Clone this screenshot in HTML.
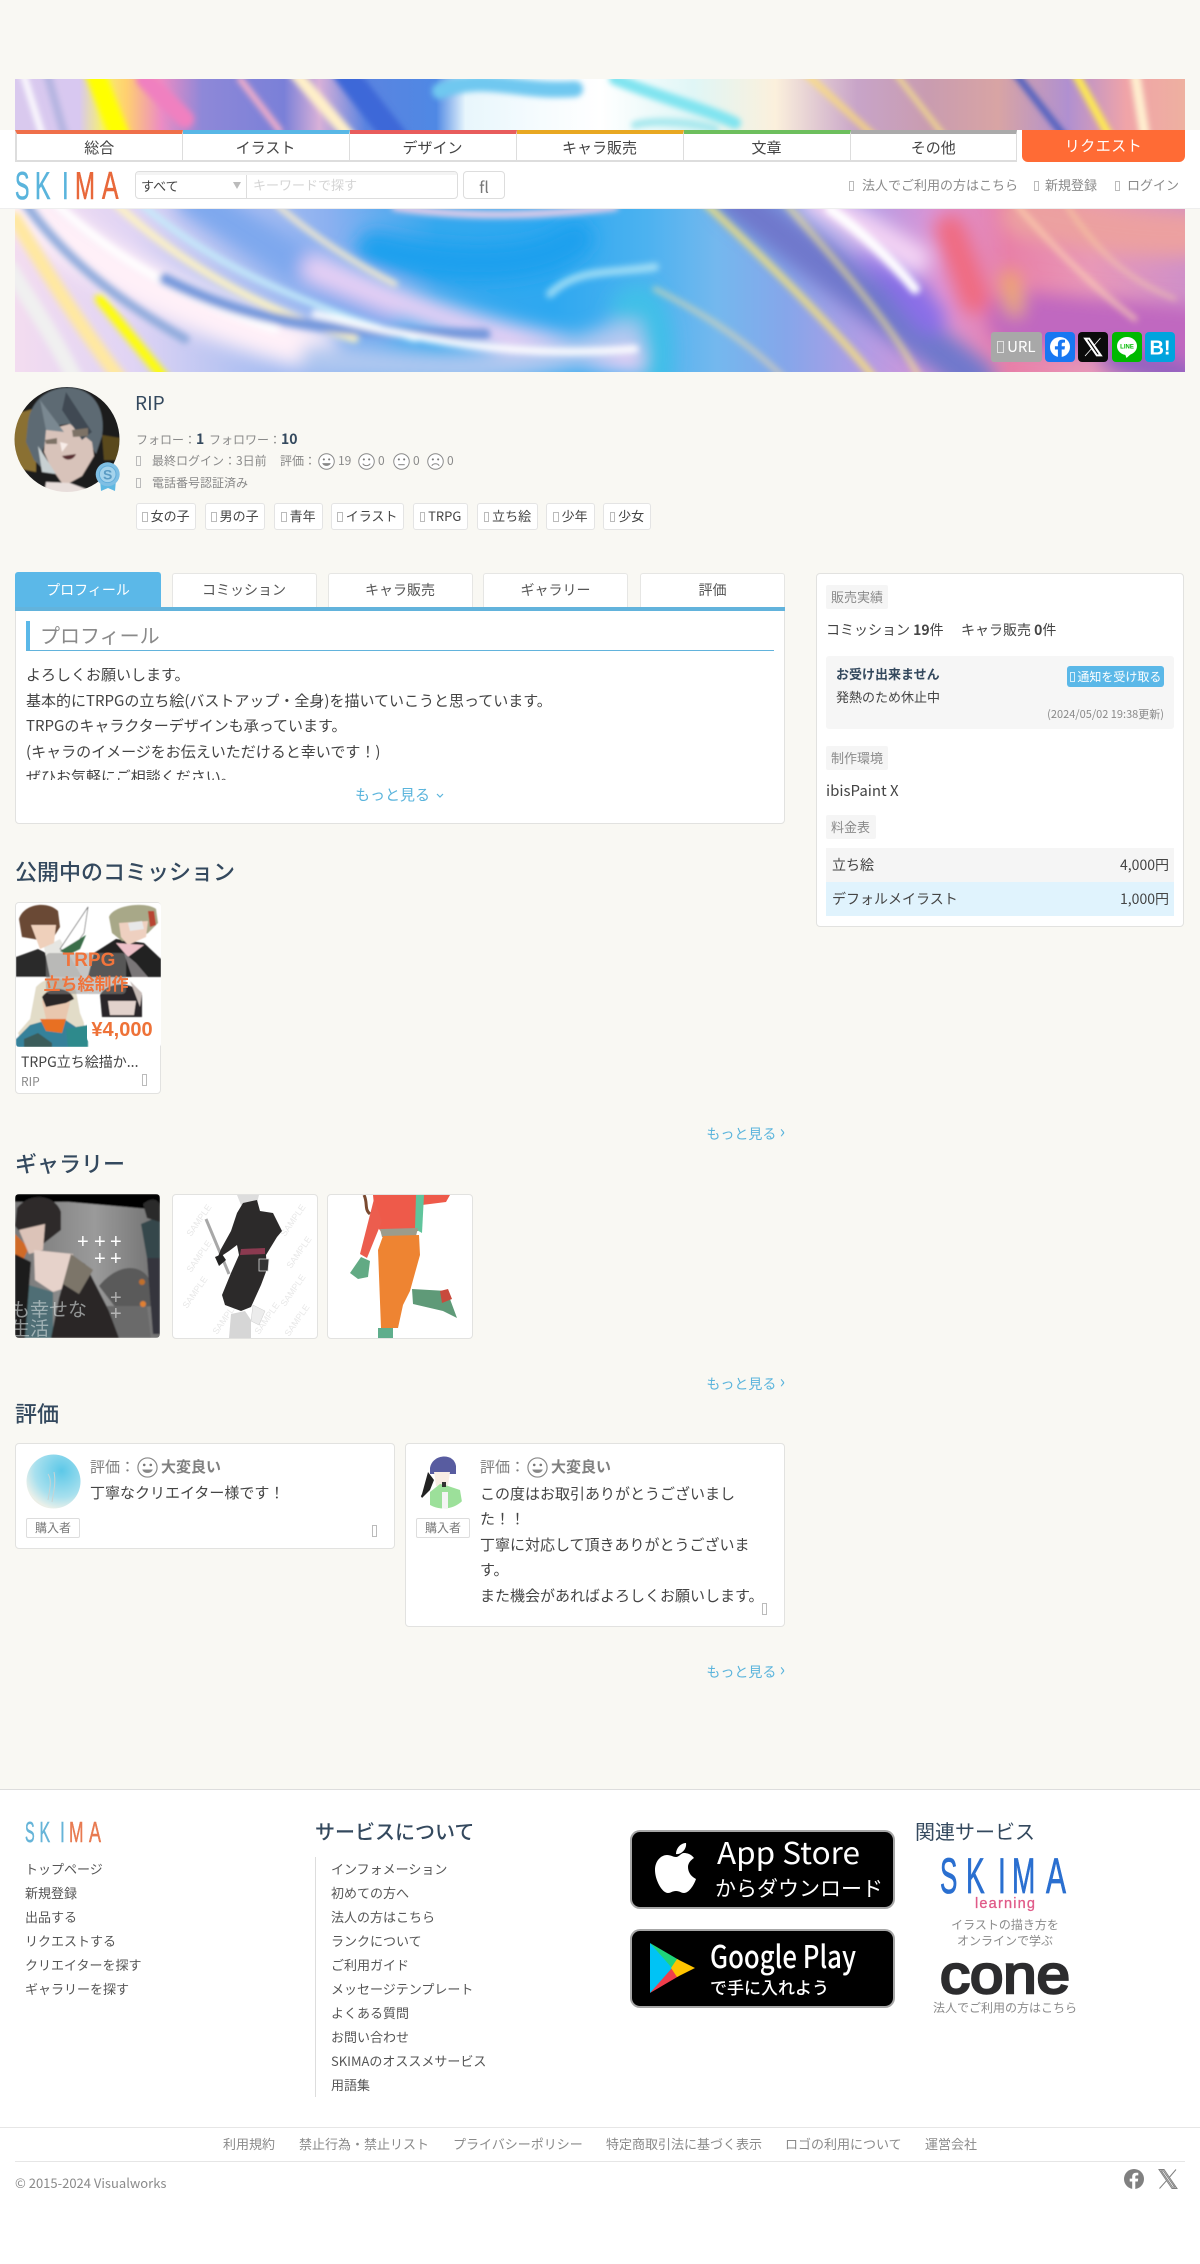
<!DOCTYPE html>
<html lang="ja">
<head>
<meta charset="utf-8">
<title>RIP - SKIMA</title>
<style>
html,body{margin:0;padding:0}
body{width:1200px;height:2264px;position:relative;overflow:hidden;background:#f9f8f3;font-family:"Noto Sans CJK JP","Liberation Sans",sans-serif;color:#333;font-size:14px}
.a{position:absolute;display:block;box-sizing:border-box}
.t{position:absolute;white-space:nowrap;line-height:20px;height:20px}
.c{text-align:center}
.g{color:#8a8a8a}
.b{color:#5ab4dc}
.h{color:#34495e;font-size:22px;font-weight:500;line-height:30px;height:30px}
.w{background:#fff;border:1px solid #e2e2e0;border-radius:4px}
.q{display:inline-block;box-sizing:border-box;width:.42em;height:.8em;border:1px solid #bbb;vertical-align:-1px}
.nav{position:absolute;top:130px;height:32px;box-sizing:border-box;background:#fff;border-top:4px solid;border-bottom:2px solid #ddd;border-right:1px solid #ddd;text-align:center;line-height:27px;font-size:15px;color:#444}
.tab{position:absolute;top:573px;height:35px;box-sizing:border-box;background:#fff;border:1px solid #e6e6e4;border-bottom:0;border-radius:3px 3px 0 0;text-align:center;line-height:33px;font-size:14px;color:#555;width:145px}
.tag{position:absolute;top:503px;height:27px;box-sizing:border-box;background:#fff;border:1px solid #e4e4e4;border-radius:3px;text-align:center;line-height:24px;font-size:13px;color:#444}
.lab{position:absolute;height:24px;background:#f5f5f5;border-radius:2px;color:#8a8a8a;font-size:13px;line-height:23px;padding:0 5px;box-sizing:border-box;white-space:nowrap}
.f{position:absolute;white-space:nowrap;font-size:13px;line-height:20px;height:20px;color:#555}
.fb{position:absolute;white-space:nowrap;font-size:13px;line-height:20px;height:20px;color:#8a8a8a}
.m{font-size:18px;line-height:14px;vertical-align:1px}
svg{display:block}
</style>
</head>
<body>

<!-- top banner -->
<svg class="a" style="left:15px;top:79px" width="1170" height="52" viewBox="0 0 1170 52">
<defs>
<linearGradient id="tb" x1="0" x2="1" y1="0" y2="0">
<stop offset="0" stop-color="#d9c9ee"/><stop offset=".055" stop-color="#d8c8f0"/><stop offset=".075" stop-color="#f6f070"/><stop offset=".095" stop-color="#ffd070"/><stop offset=".125" stop-color="#ec8cc4"/><stop offset=".16" stop-color="#8e88d8"/><stop offset=".23" stop-color="#7a80d8"/><stop offset=".26" stop-color="#d8b0d8"/><stop offset=".3" stop-color="#5a84e0"/><stop offset=".36" stop-color="#4f88e4"/><stop offset=".385" stop-color="#e8f6fc"/><stop offset=".44" stop-color="#f4fbfe"/><stop offset=".5" stop-color="#fff"/><stop offset=".58" stop-color="#e0f6f6"/><stop offset=".65" stop-color="#fbf0dc"/><stop offset=".72" stop-color="#c8a4c8"/><stop offset=".78" stop-color="#c99cb0"/><stop offset=".84" stop-color="#d8a4a4"/><stop offset=".9" stop-color="#b090d0"/><stop offset=".95" stop-color="#f0a4a8"/><stop offset="1" stop-color="#eeb0a0"/>
</linearGradient>
<filter id="b1" x="-20%" y="-50%" width="140%" height="200%"><feGaussianBlur stdDeviation="3"/></filter>
<clipPath id="tbc"><rect width="1170" height="52"/></clipPath>
</defs>
<g clip-path="url(#tbc)">
<rect width="1170" height="52" fill="url(#tb)"/>
<g filter="url(#b1)" fill="none" stroke-linecap="round">
<path d="M80 -6L105 58" stroke="#ffff00" stroke-width="20"/>
<path d="M8 -6L28 58" stroke="#fff" stroke-width="6"/>
<path d="M32 -6L50 58" stroke="#b4b4e0" stroke-width="8"/>
<path d="M130 0L170 40" stroke="#f080c0" stroke-width="18"/>
<path d="M225 0L265 52" stroke="#f8b0c8" stroke-width="6"/>
<path d="M280 -6L335 58" stroke="#fff0c8" stroke-width="12"/>
<path d="M330 -6L380 58" stroke="#3c68d8" stroke-width="24"/>
<path d="M425 12C470 -6 500 14 560 10" stroke="#70c8f0" stroke-width="16"/>
<path d="M600 0C650 20 690 30 720 44" stroke="#80e4f0" stroke-width="12"/>
<path d="M620 46C640 40 680 44 700 50" stroke="#a8e8ee" stroke-width="8"/>
<path d="M790 -6L860 58" stroke="#ffe070" stroke-width="7" opacity=".7"/>
<path d="M880 -6L930 58" stroke="#fff080" stroke-width="5" opacity=".7"/>
<path d="M1000 -6L1050 58" stroke="#5060c0" stroke-width="7"/>
<path d="M1060 -6L1095 58" stroke="#ffec50" stroke-width="8"/>
<path d="M1120 -6L1130 58" stroke="#fff0d0" stroke-width="10"/>
</g>
</g>
</svg>

<!-- header band -->
<div class="a" style="left:0;top:130px;width:1200px;height:79px;background:#fff;border-bottom:1px solid #eee"></div>
<div class="nav" style="left:15px;width:167.5px;border-top-color:#ef6f4a;border-left:2px solid #ddd">総合</div>
<div class="nav" style="left:182.5px;width:167px;border-top-color:#58b7e6">イラスト</div>
<div class="nav" style="left:349.5px;width:167px;border-top-color:#e85c5c">デザイン</div>
<div class="nav" style="left:516.5px;width:167px;border-top-color:#e8a822">キャラ販売</div>
<div class="nav" style="left:683.5px;width:167px;border-top-color:#6dbf5d">文章</div>
<div class="nav" style="left:850.5px;width:166.5px;border-top-color:#aaa">その他</div>
<div class="a c" style="left:1022px;top:130px;width:163px;height:32px;background:#ff6b35;border-radius:0 0 6px 6px;color:#fff;font-size:15px;line-height:31px;letter-spacing:.5px">リクエスト</div>

<!-- logo -->
<svg class="a" style="left:15px;top:168px" width="106" height="34" viewBox="0 0 106 34" font-family="Liberation Sans,sans-serif" font-size="40" stroke-width=".6">
<text transform="translate(0,31) scale(.54,.98)" fill="#5ab4dc" stroke="#5ab4dc">S</text>
<text transform="translate(20,31) scale(.58,.98)" fill="#5ab4dc" stroke="#5ab4dc">K</text>
<text transform="translate(47,31) scale(.6,.98)" fill="#5ab4dc" stroke="#5ab4dc">I</text>
<text transform="translate(60,31) scale(.6,.98)" fill="#e8683a" stroke="#e8683a">M</text>
<text transform="translate(87,31) scale(.62,.98)" fill="#e8683a" stroke="#e8683a">A</text>
</svg>

<!-- search -->
<div class="a" style="left:135px;top:171px;width:323px;height:28px;background:#fff;border:1px solid #ddd;border-radius:4px"></div>
<div class="a" style="left:246px;top:171px;width:1px;height:28px;background:#ddd"></div>
<div class="a" style="left:136px;top:172px;width:321px;height:3px;background:#f4f4f4;border-radius:3px 3px 0 0"></div>
<div class="t" style="left:141px;top:176px;font-size:13px;color:#444">すべて</div>
<div class="a" style="left:233px;top:182px;width:0;height:0;border-left:4px solid transparent;border-right:4px solid transparent;border-top:7px solid #bbb"></div>
<div class="t" style="left:253px;top:175px;font-size:13px;color:#d4d4d4">キーワードで探す</div>
<div class="a" style="left:463px;top:171px;width:42px;height:28px;background:#fff;border:1px solid #ddd;border-radius:4px"></div>
<div class="t c" style="left:463px;top:176px;width:42px;font-size:16px;color:#777">fl</div>
<div class="t g" style="left:849px;top:175px;font-size:13px"><span class="q"></span></div>
<div class="t g" style="left:862px;top:175px;font-size:13px">法人でご利用の方はこちら</div>
<div class="t g" style="left:1034px;top:175px;font-size:13px"><span class="q"></span></div>
<div class="t g" style="left:1045px;top:175px;font-size:13px">新規登録</div>
<div class="t g" style="left:1115px;top:175px;font-size:13px"><span class="q"></span></div>
<div class="t g" style="left:1127px;top:175px;font-size:13px">ログイン</div>

<!-- main banner -->
<svg class="a" style="left:15px;top:209px" width="1170" height="163" viewBox="0 0 1170 163">
<defs>
<linearGradient id="mb" x1="0" x2="1" y1="0" y2="0">
<stop offset="0" stop-color="#f3dcf0"/><stop offset=".1" stop-color="#e0d4f4"/><stop offset=".18" stop-color="#b8c4f2"/><stop offset=".27" stop-color="#8ab0f0"/><stop offset=".36" stop-color="#35a8ee"/><stop offset=".46" stop-color="#2ea8f0"/><stop offset=".54" stop-color="#4cb2f0"/><stop offset=".6" stop-color="#74b8ee"/><stop offset=".66" stop-color="#86a6ea"/><stop offset=".73" stop-color="#b49ce4"/><stop offset=".79" stop-color="#dc94d4"/><stop offset=".85" stop-color="#e880a8"/><stop offset=".92" stop-color="#e898b8"/><stop offset="1" stop-color="#d090c8"/>
</linearGradient>
<filter id="m1" x="-20%" y="-50%" width="140%" height="200%"><feGaussianBlur stdDeviation="3.2"/></filter>
<filter id="m2" x="-20%" y="-50%" width="140%" height="200%"><feGaussianBlur stdDeviation="9"/></filter>
<clipPath id="mbc"><rect width="1170" height="163"/></clipPath>
</defs>
<g clip-path="url(#mbc)">
<rect width="1170" height="163" fill="url(#mb)"/>
<g filter="url(#m2)" fill="none" stroke-linecap="round">
<path d="M0 -10C60 40 150 100 300 140" stroke="#fff0f8" stroke-width="45"/>
<path d="M180 -10C240 30 310 70 360 110" stroke="#7ea8ee" stroke-width="40"/>
<path d="M300 60C400 100 500 140 620 150" stroke="#e8d0f4" stroke-width="28"/>
<path d="M300 150C420 160 520 170 620 120" stroke="#b0c8f0" stroke-width="30"/>
<path d="M360 40C440 60 520 60 560 30" stroke="#1ea0ee" stroke-width="36"/>
<path d="M720 -10L960 170" stroke="#6f78cc" stroke-width="40"/>
<path d="M860 40L915 110" stroke="#8a6ee8" stroke-width="32"/>
<path d="M800 -10L900 50" stroke="#f4d4f4" stroke-width="30"/>
<path d="M935 20L960 90" stroke="#f06a80" stroke-width="30"/>
<path d="M1000 110L1170 125" stroke="#c068c0" stroke-width="56"/>
<path d="M1100 150L1180 170" stroke="#9060c0" stroke-width="26"/>
<path d="M1010 5C1080 20 1120 25 1170 25" stroke="#eca0a0" stroke-width="46"/>
<path d="M610 100C630 70 650 120 640 170" stroke="#40c0e8" stroke-width="30"/>
<path d="M995 70L1000 100" stroke="#f0b060" stroke-width="16"/>
</g>
<g filter="url(#m1)" fill="none" stroke-linecap="round">
<path d="M0 10C30 60 60 110 105 170" stroke="#ffe8a0" stroke-width="14"/>
<path d="M10 -6C50 50 100 90 170 130" stroke="#8eaadc" stroke-width="9"/>
<path d="M-5 60C20 100 40 130 60 170" stroke="#f0f0f0" stroke-width="16"/>
<path d="M85 90L150 170" stroke="#ffff00" stroke-width="10"/>
<path d="M40 -6C100 50 170 90 260 120" stroke="#fff" stroke-width="8"/>
<path d="M100 -6C160 50 240 100 340 130" stroke="#fff4c0" stroke-width="7"/>
<path d="M125 -6C190 50 270 90 400 130" stroke="#c4ecfa" stroke-width="6"/>
<path d="M150 70C230 110 300 125 470 125" stroke="#7498dc" stroke-width="11"/>
<path d="M260 -6C300 30 350 60 380 75" stroke="#fff0c8" stroke-width="5"/>
<path d="M380 -2C430 6 500 10 600 -2" stroke="#f8d0e8" stroke-width="7"/>
<path d="M300 105C400 130 500 150 620 140" stroke="#fff" stroke-width="7"/>
<path d="M535 85C560 60 590 65 640 58" stroke="#c4f0f8" stroke-width="8" opacity=".7"/>
<path d="M690 -6C750 50 820 120 860 170" stroke="#ffe870" stroke-width="7" opacity=".8"/>
<path d="M770 -6C820 50 880 120 905 170" stroke="#fff080" stroke-width="6" opacity=".6"/>
<path d="M815 0C850 25 880 55 900 80" stroke="#ffffff" stroke-width="10"/>
<path d="M640 80C700 110 740 140 770 170" stroke="#f8e0a0" stroke-width="5" opacity=".6"/>
<path d="M1000 -6C1040 40 1080 80 1120 110" stroke="#ffd8b0" stroke-width="5" opacity=".7"/>
<path d="M1050 -6C1080 40 1110 70 1160 90" stroke="#ffe8a0" stroke-width="3" opacity=".6"/>
</g>
</g>
</svg>

<!-- share buttons -->
<div class="a c" style="left:991px;top:332px;width:51px;height:30px;background:#a8a8a8;border-radius:3px;color:#fff;font-size:15px;line-height:30px;white-space:nowrap"><span class="q" style="border-color:#e0e0e0"></span> URL</div>
<svg class="a" style="left:1045px;top:332px" width="30" height="30" viewBox="0 0 30 30"><rect width="30" height="30" rx="4" fill="#1877f2"/><circle cx="15" cy="15" r="10" fill="#fff"/><path d="M16.7 25.5v-8h2.8l.5-3.2h-3.3v-2c0-.9.4-1.7 1.8-1.7h1.5V7.8s-1.4-.2-2.7-.2c-2.7 0-4.4 1.6-4.4 4.5v2.2h-3v3.2h3v8z" fill="#1877f2"/></svg>
<svg class="a" style="left:1078px;top:332px" width="30" height="30" viewBox="0 0 30 30"><rect width="30" height="30" rx="4" fill="#0b0b0b"/><path d="M6 6h5.500L24 24h-5.500zM8.500 7.200L19.200 22.800h2.300L10.800 7.200zM22.500 6L16 13.500M13.600 16.600L7 24" fill="#fff" stroke="#fff" stroke-width=".8"/></svg>
<svg class="a" style="left:1112px;top:332px" width="30" height="30" viewBox="0 0 30 30"><rect width="30" height="30" rx="4" fill="#00b900"/><ellipse cx="15" cy="14" rx="10" ry="9" fill="#fff"/><path d="M13 22l1.500 4 5-4.500z" fill="#fff"/><text x="15" y="16.500" text-anchor="middle" font-size="6" font-weight="700" fill="#00b900" font-family="Liberation Sans,sans-serif">LINE</text></svg>
<svg class="a" style="left:1145px;top:332px" width="30" height="30" viewBox="0 0 30 30"><rect width="30" height="30" rx="4" fill="#00a4de"/><text x="15" y="22.500" text-anchor="middle" font-size="20" font-weight="700" fill="#fff" font-family="Liberation Sans,sans-serif">B!</text></svg>

<!-- profile -->
<svg class="a" style="left:10px;top:380px" width="120" height="115" viewBox="0 0 120 115">
<defs><clipPath id="av"><circle cx="57" cy="59.500" r="52.500"/></clipPath><filter id="avb"><feGaussianBlur stdDeviation=".7"/></filter></defs>
<g clip-path="url(#av)">
<g filter="url(#avb)">
<rect width="120" height="115" fill="#1c1b1b"/>
<path d="M2 35L26 28L26 92L6 88z" fill="#8a7030"/>
<path d="M92 55L110 58L108 80L94 80z" fill="#5a4a1e"/>
<path d="M18 42C22 16 44 6 62 8C84 10 96 30 92 56L86 74L76 58L58 44L42 46L32 72L36 92L24 80L16 62z" fill="#5d6a73"/>
<path d="M36 50L60 44L82 62L84 76L72 96L54 106L40 86L34 72z" fill="#d8c3ba"/>
<path d="M30 20L54 52L36 50z" fill="#7a8891"/>
<path d="M56 12L82 52L72 60L52 30z" fill="#3f4a53"/>
<path d="M35 60L47 58L47 64L36 64zM62 50L78 48L78 56L63 57z" fill="#7d7266"/>
<path d="M50 62L58 64L52 72z" fill="#f8ece8"/>
<path d="M52 76L66 74C64 80 56 82 52 76z" fill="#5a2f30"/>
<path d="M28 66L46 94L32 92z" fill="#c8d0d2"/>
<path d="M36 102L60 103L84 112V118H34z" fill="#e8dedb"/>
</g>
</g>
<path d="M90 100h7l1 2l1-2h7l-1 11l-7-3l-7 3z" fill="#5fb8e2"/>
<circle cx="97.700" cy="94.300" r="12" fill="#7fbfe4"/><circle cx="97.700" cy="94.300" r="8.300" fill="#a5d3ec" stroke="#63aedb"/>
<text x="97.700" y="99.300" text-anchor="middle" font-size="14" font-weight="700" fill="#5c9cc4" font-family="Liberation Sans,sans-serif">S</text>
</svg>

<div class="t" style="left:135px;top:390px;font-size:19px;line-height:26px;height:26px;color:#34495e">RIP</div>
<div class="t g" style="left:136px;top:429px;font-size:12px">フォロー：<b style="font-size:14px;color:#34495e;font-weight:700">1</b> <span style="margin-left:2px">フォロワー：</span><b style="font-size:14px;color:#34495e;font-weight:700">10</b></div>
<div class="t g" style="left:136px;top:451px;font-size:12px"><span class="q"></span></div>
<div class="t g" style="left:152px;top:451px;font-size:12px">最終ログイン：3日前</div>
<div class="t g" style="left:280px;top:451px;font-size:12px">評価：</div>
<svg class="a" style="left:0;top:0;width:0;height:0"><defs>
<g id="sm"><circle cx="8" cy="8" r="7.300" fill="#fff" stroke="#888" stroke-width=".9"/><circle cx="5.500" cy="6" r="1" fill="#777"/><circle cx="10.500" cy="6" r="1" fill="#777"/></g>
</defs></svg>
<svg class="a" style="left:318px;top:453px" width="17" height="17" viewBox="0 0 16 16"><use href="#sm"/><path d="M4 9.500c1 3.500 7 3.500 8 0z" fill="#888"/></svg>
<div class="t g" style="left:338px;top:451px;font-size:12px">19</div>
<svg class="a" style="left:358px;top:453px" width="17" height="17" viewBox="0 0 16 16"><use href="#sm"/><path d="M4.500 10c1.500 2.500 5.500 2.500 7 0" fill="none" stroke="#888"/></svg>
<div class="t g" style="left:378px;top:451px;font-size:12px">0</div>
<svg class="a" style="left:393px;top:453px" width="17" height="17" viewBox="0 0 16 16"><use href="#sm"/><path d="M5 11h6" fill="none" stroke="#888"/></svg>
<div class="t g" style="left:413px;top:451px;font-size:12px">0</div>
<svg class="a" style="left:427px;top:453px" width="17" height="17" viewBox="0 0 16 16"><use href="#sm"/><path d="M4.500 12c1.500-2.500 5.500-2.500 7 0" fill="none" stroke="#888"/></svg>
<div class="t g" style="left:447px;top:451px;font-size:12px">0</div>
<div class="t g" style="left:136px;top:473px;font-size:12px"><span class="q"></span></div>
<div class="t g" style="left:152px;top:473px;font-size:12px">電話番号認証済み</div>

<div class="tag" style="left:136px;width:60px"><span class="q"></span> 女の子</div>
<div class="tag" style="left:205px;width:60px"><span class="q"></span> 男の子</div>
<div class="tag" style="left:274px;width:49px"><span class="q"></span> 青年</div>
<div class="tag" style="left:331px;width:73px"><span class="q"></span> イラスト</div>
<div class="tag" style="left:413px;width:55px"><span class="q"></span> TRPG</div>
<div class="tag" style="left:477px;width:61px"><span class="q"></span> 立ち絵</div>
<div class="tag" style="left:546px;width:49px"><span class="q"></span> 少年</div>
<div class="tag" style="left:603px;width:48px"><span class="q"></span> 少女</div>

<!-- tabs -->
<div class="tab" style="left:15px;top:572px;width:146px;height:36px;background:#5bb8e8;border-color:#5bb8e8;color:#fff;line-height:35px">プロフィール</div>
<div class="tab" style="left:171.500px">コミッション</div>
<div class="tab" style="left:327.500px">キャラ販売</div>
<div class="tab" style="left:483px">ギャラリー</div>
<div class="tab" style="left:640px">評価</div>
<div class="a w" style="left:15px;top:607px;width:770px;height:217px"></div>
<div class="a" style="left:15px;top:607px;width:770px;height:4px;background:#62b3dc"></div>
<div class="a" style="left:26px;top:621px;width:4px;height:30px;background:#5bb8e8"></div>
<div class="a" style="left:26px;top:650px;width:748px;height:1px;background:#62b3dc"></div>
<div class="t" style="left:40px;top:620px;font-size:20px;line-height:30px;height:30px;color:#8a8a8a">プロフィール</div>
<div class="a" style="left:26px;top:662px;width:748px;height:118px;overflow:hidden;font-size:15px;line-height:25.500px;color:#444;white-space:nowrap">よろしくお願いします。<br>基本的にTRPGの立ち絵(バストアップ・全身)を描いていこうと思っています。<br>TRPGのキャラクターデザインも承っています。<br>(キャラのイメージをお伝えいただけると幸いです！)<br>ぜひお気軽にご相談ください。</div>
<div class="t b" style="left:355px;top:785px;font-size:15px">もっと見る</div>
<svg class="a" style="left:436px;top:793px" width="8" height="6" viewBox="0 0 8 6"><path d="M1 1l3 3 3-3" fill="none" stroke="#5ab4dc" stroke-width="1.200"/></svg>

<!-- sidebar -->
<div class="a w" style="left:816px;top:573px;width:368px;height:354px"></div>
<div class="lab" style="left:826px;top:585px;width:62px">販売実績</div>
<div class="t" style="left:826px;top:620px;font-size:14px;color:#444">コミッション <b style="font-weight:700">19</b>件</div>
<div class="t" style="left:961px;top:620px;font-size:14px;color:#444">キャラ販売 <b style="font-weight:700">0</b>件</div>
<div class="a" style="left:826px;top:656px;width:348px;height:73px;background:#f6f6f6;border-radius:3px"></div>
<div class="t" style="left:836px;top:664px;font-size:13px;font-weight:700;color:#34495e">お受け出来ません</div>
<div class="t" style="left:836px;top:687px;font-size:13px;color:#444">発熱のため休止中</div>
<div class="a c" style="left:1067px;top:666px;width:97px;height:21px;background:#5bb8e8;border-radius:3px;color:#fff;font-size:12px;line-height:21px;white-space:nowrap"><span class="q" style="border-color:#d8eefa"></span> 通知を受け取る</div>
<div class="t g" style="right:36px;top:704px;font-size:11px">(2024/05/02 19:38更新)</div>
<div class="lab" style="left:826px;top:746px;width:62px">制作環境</div>
<div class="t" style="left:826px;top:781px;font-size:15px;color:#444">ibisPaint X</div>
<div class="lab" style="left:826px;top:815px;width:50px">料金表</div>
<div class="a" style="left:826px;top:848px;width:348px;height:34px;background:#f5f5f5"></div>
<div class="a" style="left:826px;top:882px;width:348px;height:34px;background:#e0f3fd"></div>
<div class="t" style="left:832px;top:855px;font-size:14px;color:#444">立ち絵</div>
<div class="t" style="right:31px;top:855px;font-size:14px;color:#444">4,000円</div>
<div class="t" style="left:832px;top:889px;font-size:14px;color:#444">デフォルメイラスト</div>
<div class="t" style="right:31px;top:889px;font-size:14px;color:#444">1,000円</div>

<!-- commissions -->
<div class="t h" style="left:15px;top:856px">公開中のコミッション</div>
<div class="a w" style="left:15px;top:902px;width:146px;height:192px"></div>
<svg class="a" style="left:15.500px;top:902.500px" width="145" height="144" viewBox="0 0 145 144">
<defs><clipPath id="cc"><rect width="145" height="144" rx="3"/></clipPath><filter id="ccb"><feGaussianBlur stdDeviation=".5"/></filter></defs>
<g clip-path="url(#cc)">
<rect width="145" height="144" fill="#fff"/>
<g filter="url(#ccb)">
<path d="M0 54L22 46L30 50L60 74H0z" fill="#2c2b2a"/>
<path d="M28 44L44 36L66 74H34z" fill="#e6e6e2"/>
<path d="M3 16C8 0 32 -2 42 8L44 24L34 40L18 36L6 34z" fill="#6b4a36"/>
<path d="M15 22L40 22L38 40L24 46z" fill="#efd0bb"/>
<path d="M44 46L72 4L68 30L54 50z" fill="#fff" stroke="#666" stroke-width=".7"/>
<path d="M44 48L70 32L64 46L52 52z" fill="#3a6e4a"/>
<path d="M72 74L78 50L100 36L128 40L145 56V74H72z" fill="#232223"/>
<path d="M93 14C97 2 130 -2 140 6L142 20L132 30L118 38L106 38L96 30z" fill="#a8a888"/>
<path d="M103 20L132 18L130 34L112 42L105 34z" fill="#eed0c0"/>
<path d="M112 20l14 -2l2 8l-14 2z" fill="#e8e8e8"/>
<path d="M132 8l6 0l2 14l-6 2z" fill="#b84432"/>
<path d="M100 40L128 42L112 54z" fill="#eec0c8"/>
<path d="M108 50L120 60L132 74H116z" fill="#7a7678"/>
<rect x="0" y="74" width="72" height="70" fill="#fff"/>
<path d="M20 84C30 72 52 72 60 88L64 110L68 120V144H8L2 130L14 116z" fill="#e2dcc8"/>
<path d="M26 98C30 90 52 88 54 100L50 116H30z" fill="#e9c7ae"/>
<path d="M26 94C34 82 54 84 58 96L50 100L30 104z" fill="#2a2626"/>
<path d="M0 136L14 122L28 118L48 116L60 124L72 122V144H0z" fill="#35819a"/>
<path d="M24 116H50L46 130L30 128z" fill="#e87024"/>
<path d="M8 136L22 130L36 140V144H8z" fill="#3a5c5a"/>
<path d="M50 126L72 122V144H52z" fill="#2f8a8c"/>
<path d="M84 92C92 78 118 78 126 92L126 114H86z" fill="#2b2829"/>
<path d="M92 98L120 98L118 112H94z" fill="#e2d2cc"/>
<path d="M114 78L126 90L124 104L118 88z" fill="#c8bcb8"/>
<rect x="30" y="50" width="80" height="41" fill="#8c8c8c" opacity=".5" rx="4"/>
</g>
<text x="73" y="63" text-anchor="middle" font-size="19" font-weight="700" fill="#f0743c" font-family="Liberation Sans,sans-serif">TRPG</text>
<text x="70" y="87" text-anchor="middle" font-size="17" font-weight="700" fill="#f0743c" font-family="Noto Sans CJK JP,sans-serif">立ち絵制作</text>
<path d="M71 120a5 5 0 0 1 5-5H145V140H76a5 5 0 0 1-5-5z" fill="#fff"/>
<text x="106" y="133" text-anchor="middle" font-size="20" font-weight="700" fill="#ee7238" font-family="Liberation Sans,sans-serif">¥4,000</text>
</g>
</svg>
<div class="t" style="left:21px;top:1052px;font-size:14px;color:#444">TRPG立ち絵描か...</div>
<div class="t g" style="left:21px;top:1072px;font-size:12px">RIP</div>
<span class="a q" style="left:142px;top:1074px;width:5px;height:12px"></span>
<div class="t b" style="right:415px;top:1124px;font-size:14px">もっと見る <span class="m">›</span></div>

<!-- gallery -->
<div class="t h" style="left:15px;top:1148px">ギャラリー</div>
<svg class="a" style="left:15px;top:1194px" width="145" height="144" viewBox="0 0 145 144">
<defs><clipPath id="g1"><rect width="145" height="144" rx="4"/></clipPath>
<linearGradient id="g1b" x1="0" x2="1" y1="0" y2="0"><stop offset="0" stop-color="#777"/><stop offset=".55" stop-color="#9a9a9a"/><stop offset="1" stop-color="#707070"/></linearGradient><filter id="g1f"><feGaussianBlur stdDeviation=".7"/></filter></defs>
<g clip-path="url(#g1)">
<g filter="url(#g1f)">
<rect width="145" height="144" fill="url(#g1b)"/>
<path d="M0 0H145V16L54 8L0 8z" fill="#050505"/>
<path d="M0 40L14 54L8 66H0z" fill="#d06a28"/>
<path d="M2 14C14 -2 40 0 46 18L46 36L28 50L10 44L0 32z" fill="#2e2c2c"/>
<path d="M4 36L30 30L28 56L14 60z" fill="#dcc3b8"/>
<path d="M19 56L58 60L56 92L38 98L20 86z" fill="#e6d2ca"/>
<path d="M10 90L38 98V144H6z" fill="#4f6e74"/>
<path d="M56 62L70 70L108 144H36L44 104z" fill="#2a2828"/>
<path d="M56 60L78 76L64 100L48 90z" fill="#7b7469"/>
<path d="M0 60L16 68L10 144H0z" fill="#1b1b1b"/>
<path d="M84 92C100 72 125 66 136 88L136 112L104 118z" fill="#5a5a5a"/>
<path d="M92 112L132 112L136 144H104z" fill="#6a6a6a"/>
<circle cx="127" cy="88" r="3" fill="#c0702c"/><circle cx="128" cy="110" r="3" fill="#e08030"/>
<path d="M126 30L145 22V100L132 64z" fill="#36464c"/>
<path d="M128 10C138 2 145 6 145 14V28L132 24z" fill="#2a2a2a"/>
<path d="M132 64H145V140H138z" fill="#34343c"/>
</g>
<g fill="#fff" font-size="20" font-family="Liberation Sans,sans-serif"><text x="62" y="54">+</text><text x="79" y="54">+</text><text x="95" y="54">+</text><text x="79" y="71">+</text><text x="95" y="71">+</text><text x="95" y="110" opacity=".5">+</text><text x="95" y="126" opacity=".5">+</text></g>
<text x="-4" y="122" font-size="19" fill="#d8dede" opacity=".6" font-family="Noto Sans CJK JP,sans-serif">も幸せな</text>
<text x="-4" y="141" font-size="19" fill="#d8dede" opacity=".6" font-family="Noto Sans CJK JP,sans-serif">生活</text>
</g>
</svg>
<div class="a w" style="left:171.500px;top:1194px;width:146px;height:145px;overflow:hidden;padding:0">
<svg width="144" height="143" viewBox="0 0 144 143">
<g fill="#e8e8e8" font-size="9" font-family="Liberation Sans,sans-serif">
<text transform="translate(18,42) rotate(-55)">SAMPLE</text><text transform="translate(112,42) rotate(-55)">SAMPLE</text><text transform="translate(18,78) rotate(-55)">SAMPLE</text><text transform="translate(118,74) rotate(-55)">SAMPLE</text><text transform="translate(14,114) rotate(-55)">SAMPLE</text><text transform="translate(112,112) rotate(-55)">SAMPLE</text><text transform="translate(44,140) rotate(-55)">SAMPLE</text><text transform="translate(86,140) rotate(-55)">SAMPLE</text><text transform="translate(116,142) rotate(-55)">SAMPLE</text>
</g>
<path d="M33 24L56 79" stroke="#a8a8a8" stroke-width="3"/>
<path d="M64 0H86L84 8L72 12L68 10z" fill="#ddd"/>
<path d="M70 8L84 5L87 16L100 18L109 36L104 42L93 60L94 74L88 90L78 112L68 116L52 110L49 100L58 78L66 60L64 50L56 56L50 60L44 64L48 54L58 36L64 18z" fill="#2c2a2a"/>
<path d="M68 54L92 53L92 59L67 60z" fill="#8b3a50"/>
<path d="M42 62l7-3l4 6l-7 6z" fill="#222"/>
<path d="M86 64L96 64L95 76L86 76z" fill="#333" stroke="#ddd" stroke-width=".8"/>
<path d="M58 119L72 116L78 125L78 143H56z" fill="#d6d6d6"/>
<path d="M80 110L92 116L86 130L78 126z" fill="#ececec" stroke="#ccc" stroke-width=".5"/>
</svg>
</div>
<div class="a w" style="left:327px;top:1194px;width:146px;height:145px;overflow:hidden">
<svg width="144" height="143" viewBox="0 0 144 143">
<path d="M36 0C40 8 36 14 42 19" stroke="#7a4a30" stroke-width="3" fill="none"/>
<path d="M45 0H122L118 7L94 10L90 36L54 38L48 30z" fill="#ee5a4a"/>
<path d="M46 4L54 26L39 63L32 59z" fill="#ec5d4e"/>
<path d="M88 0H96L94 38L87 34z" fill="#60c49c"/>
<path d="M52 34L90 33L88 41L54 42z" fill="#9c9c8c"/>
<path d="M55 41L91 40L92 60L82 96L75 110L70 133H53L50 55z" fill="#ee8432"/>
<path d="M84 94L119 96L129 123L115 116L85 109z" fill="#5f9a78"/>
<path d="M112 96L120 94L124 104L114 108z" fill="#c84a3c"/>
<path d="M50 133H65V143H50z" fill="#5fae8c"/>
<path d="M33 62L42 66L40 82L30 84L22 78z" fill="#62aa84"/>
</svg>
</div>
<div class="t b" style="right:415px;top:1374px;font-size:14px">もっと見る <span class="m">›</span></div>

<!-- reviews -->
<div class="t h" style="left:15px;top:1398px">評価</div>
<div class="a w" style="left:15px;top:1443px;width:380px;height:106px"></div>
<svg class="a" style="left:26px;top:1454px" width="55" height="55" viewBox="0 0 55 55"><defs><radialGradient id="r1" cx=".65" cy=".3" r=".9"><stop offset="0" stop-color="#5cc8e8"/><stop offset=".55" stop-color="#a8e0ee"/><stop offset=".8" stop-color="#eaf0ea"/><stop offset="1" stop-color="#f4dcc0"/></radialGradient></defs><circle cx="27.500" cy="27.500" r="27" fill="url(#r1)"/><path d="M22 20C26 26 24 34 22 46M28 18C30 28 28 36 26 48" stroke="#c8d4d4" fill="none"/></svg>
<div class="a" style="left:26px;top:1518px;width:54px;height:20px;background:#fff;border:1px solid #ddd;border-radius:2px;font-size:12px;line-height:18px;text-align:center;color:#777">購入者</div>
<div class="t" style="left:90px;top:1457px;font-size:15px;color:#808080">評価：</div>
<svg class="a" style="left:137px;top:1457px" width="21" height="21" viewBox="0 0 16 16"><use href="#sm"/><path d="M4 9.500c1 3.500 7 3.500 8 0z" fill="#888"/></svg>
<div class="t" style="left:161px;top:1457px;font-size:15px;font-weight:700;color:#808080">大変良い</div>
<div class="t" style="left:90px;top:1483px;font-size:15px;color:#444">丁寧なクリエイター様です！</div>
<span class="a q" style="left:372px;top:1525px;width:5px;height:12px"></span>

<div class="a w" style="left:405px;top:1443px;width:380px;height:184px"></div>
<svg class="a" style="left:416px;top:1454px" width="55" height="55" viewBox="0 0 55 55"><defs><clipPath id="r2"><circle cx="27.500" cy="27.500" r="27"/></clipPath></defs><g clip-path="url(#r2)"><rect width="55" height="55" fill="#fff"/><path d="M14 14C16 0 38 -2 40 12L40 20H14z" fill="#585ca0"/><path d="M12 18L6 40L2 48L14 36L18 26z" fill="#222"/><path d="M18 18H34L32 32H20z" fill="#f8ede4"/><path d="M14 52L14 38L24 30L32 32L44 36L46 48L38 55H16z" fill="#9ce09a"/><path d="M26 38H32V55H26z" fill="#f4f4f4"/><path d="M26 28l4 0l0 5l-4 0z" fill="#333"/></g></svg>
<div class="a" style="left:416px;top:1518px;width:54px;height:20px;background:#fff;border:1px solid #ddd;border-radius:2px;font-size:12px;line-height:18px;text-align:center;color:#777">購入者</div>
<div class="t" style="left:480px;top:1457px;font-size:15px;color:#808080">評価：</div>
<svg class="a" style="left:527px;top:1457px" width="21" height="21" viewBox="0 0 16 16"><use href="#sm"/><path d="M4 9.500c1 3.500 7 3.500 8 0z" fill="#888"/></svg>
<div class="t" style="left:551px;top:1457px;font-size:15px;font-weight:700;color:#808080">大変良い</div>
<div class="a" style="left:480px;top:1480.500px;width:300px;font-size:15px;line-height:25.500px;color:#444;white-space:nowrap">この度はお取引ありがとうございまし<br>た！！<br>丁寧に対応して頂きありがとうございま<br>す。<br>また機会があればよろしくお願いします。</div>
<span class="a q" style="left:762px;top:1603px;width:5px;height:12px"></span>
<div class="t b" style="right:415px;top:1662px;font-size:14px">もっと見る <span class="m">›</span></div>

<!-- footer -->
<div class="a" style="left:0;top:1789px;width:1200px;height:475px;background:#fff;border-top:1px solid #ddd"></div>
<svg class="a" style="left:25px;top:1819px" width="80" height="26" viewBox="0 0 80 26" font-family="Liberation Sans,sans-serif" font-size="29" stroke-width=".5">
<text transform="translate(0,23) scale(.5,.98)" fill="#66b4d8" stroke="#66b4d8">S</text>
<text transform="translate(14.500,23) scale(.55,.98)" fill="#66b4d8" stroke="#66b4d8">K</text>
<text transform="translate(35,23) scale(.6,.98)" fill="#66b4d8" stroke="#66b4d8">I</text>
<text transform="translate(44,23) scale(.6,.98)" fill="#e87a50" stroke="#e87a50">M</text>
<text transform="translate(64,23) scale(.62,.98)" fill="#e87a50" stroke="#e87a50">A</text>
</svg>
<div class="f" style="left:25px;top:1859px">トップページ</div>
<div class="f" style="left:25px;top:1883px">新規登録</div>
<div class="f" style="left:25px;top:1907px">出品する</div>
<div class="f" style="left:25px;top:1931px">リクエストする</div>
<div class="f" style="left:25px;top:1955px">クリエイターを探す</div>
<div class="f" style="left:25px;top:1979px">ギャラリーを探す</div>
<div class="t" style="left:315px;top:1817px;font-size:20px;line-height:28px;height:28px;font-weight:500;color:#34495e">サービスについて</div>
<div class="a" style="left:315px;top:1857px;width:1px;height:240px;background:#ddd"></div>
<div class="f" style="left:331px;top:1859px">インフォメーション</div>
<div class="f" style="left:331px;top:1883px">初めての方へ</div>
<div class="f" style="left:331px;top:1907px">法人の方はこちら</div>
<div class="f" style="left:331px;top:1931px">ランクについて</div>
<div class="f" style="left:331px;top:1955px">ご利用ガイド</div>
<div class="f" style="left:331px;top:1979px">メッセージテンプレート</div>
<div class="f" style="left:331px;top:2003px">よくある質問</div>
<div class="f" style="left:331px;top:2027px">お問い合わせ</div>
<div class="f" style="left:331px;top:2051px">SKIMAのオススメサービス</div>
<div class="f" style="left:331px;top:2075px">用語集</div>

<!-- store badges -->
<svg class="a" style="left:630px;top:1830px" width="265" height="79" viewBox="0 0 265 79">
<rect x="1" y="1" width="263" height="77" rx="9" fill="#000" stroke="#a6a6a6" stroke-width="2"/>
<path d="M46 27c-3 0-5-2-9-2c-6 0-12 6-12 15c0 10 7 23 13 23c3 0 4-2 8-2s5 2 8 2c5 0 10-8 12-14c-6-3-8-8-8-12c0-4 3-7 6-9c-3-4-7-5-10-5c-3 0-5 4-8 4z" fill="#fff"/>
<path d="M46 24c0-6 5-11 10-11c1 6-5 12-10 11z" fill="#fff"/>
<text x="87" y="34" font-size="30" fill="#fff" textLength="143" lengthAdjust="spacingAndGlyphs" font-family="Noto Sans CJK JP,Liberation Sans,sans-serif">App Store</text>
<text x="85" y="66" font-size="21" fill="#fff" font-family="Noto Sans CJK JP,sans-serif">からダウンロード</text>
</svg>
<svg class="a" style="left:630px;top:1929px" width="265" height="79" viewBox="0 0 265 79">
<rect x="1" y="1" width="263" height="77" rx="9" fill="#000" stroke="#a6a6a6" stroke-width="2"/>
<path d="M20 14L47 39L20 64z" fill="#00c3f5"/>
<path d="M20 14L49 31L42 39z" fill="#20d47a"/>
<path d="M20 64L49 47L42 39z" fill="#ef3e4c"/>
<path d="M47 30L65 39L47 48L41 39z" fill="#ffc400"/>
<text x="80" y="39" font-size="31" font-weight="500" fill="#fff" textLength="146" lengthAdjust="spacingAndGlyphs" font-family="Noto Sans CJK JP,Liberation Sans,sans-serif">Google Play</text>
<text x="80" y="65" font-size="17" font-weight="500" fill="#fff" font-family="Noto Sans CJK JP,sans-serif">で手に入れよう</text>
</svg>

<div class="t" style="left:915px;top:1817px;font-size:20px;line-height:28px;height:28px;color:#34495e">関連サービス</div>
<svg class="a" style="left:938px;top:1852px" width="134" height="60" viewBox="0 0 134 60" font-family="Liberation Sans,sans-serif">
<g font-size="50" fill="#2a6fd0" stroke="#2a6fd0" stroke-width=".8">
<text transform="translate(2,41) scale(.52,1)">S</text>
<text transform="translate(28,41) scale(.56,1)">K</text>
<text transform="translate(60,41) scale(.56,1)">I</text>
<text transform="translate(74,41) scale(.56,1)">M</text>
<text transform="translate(108,41) scale(.6,1)">A</text>
</g>
<text x="37" y="56" font-size="14.500" letter-spacing="1.200" fill="#e05a88" stroke="#e05a88" stroke-width=".3">learning</text>
</svg>
<div class="t g c" style="left:905px;top:1915px;width:200px;font-size:12px">イラストの描き方を</div>
<div class="t g c" style="left:905px;top:1931px;width:200px;font-size:12px">オンラインで学ぶ</div>
<svg class="a" style="left:938px;top:1958px" width="134" height="40" viewBox="0 0 134 40">
<text x="2" y="35" font-size="54" fill="#2c2c2e" stroke="#2c2c2e" stroke-width="2.500" textLength="130" lengthAdjust="spacingAndGlyphs" font-family="Liberation Sans,sans-serif">cone</text>
</svg>
<div class="t g c" style="left:905px;top:1998px;width:200px;font-size:12px">法人でご利用の方はこちら</div>

<div class="a" style="left:0;top:2127px;width:1200px;height:1px;background:#e6e6e6"></div>
<div class="fb" style="left:223px;top:2134px">利用規約</div>
<div class="fb" style="left:299px;top:2134px">禁止行為・禁止リスト</div>
<div class="fb" style="left:453px;top:2134px">プライバシーポリシー</div>
<div class="fb" style="left:606px;top:2134px">特定商取引法に基づく表示</div>
<div class="fb" style="left:785px;top:2134px">ロゴの利用について</div>
<div class="fb" style="left:925px;top:2134px">運営会社</div>
<div class="a" style="left:15px;top:2161px;width:1170px;height:1px;background:#e6e6e6"></div>
<div class="fb" style="left:15px;top:2173px">© 2015-2024 Visualworks</div>
<svg class="a" style="left:1124px;top:2169px" width="20" height="20" viewBox="0 0 20 20"><circle cx="10" cy="10" r="10" fill="#808080"/><path d="M11.300 20v-7.500h2.500l.4-2.900h-2.900V7.800c0-.8.300-1.400 1.500-1.400h1.500V3.800c-.3 0-1.200-.1-2.300-.1c-2.300 0-3.800 1.400-3.800 3.900v2h-2.500v2.900h2.500V20z" fill="#fff"/></svg>
<svg class="a" style="left:1158px;top:2169px" width="20" height="20" viewBox="0 0 20 20"><path d="M1 .5h5L19 19.500h-5zM3.200 1.700L14.700 18.300h2.100L5.300 1.700zM18 .5L11.200 8.500M8.800 11.300L1.500 19.500" fill="#fff" stroke="#808080" stroke-width="1"/></svg>

</body>
</html>
